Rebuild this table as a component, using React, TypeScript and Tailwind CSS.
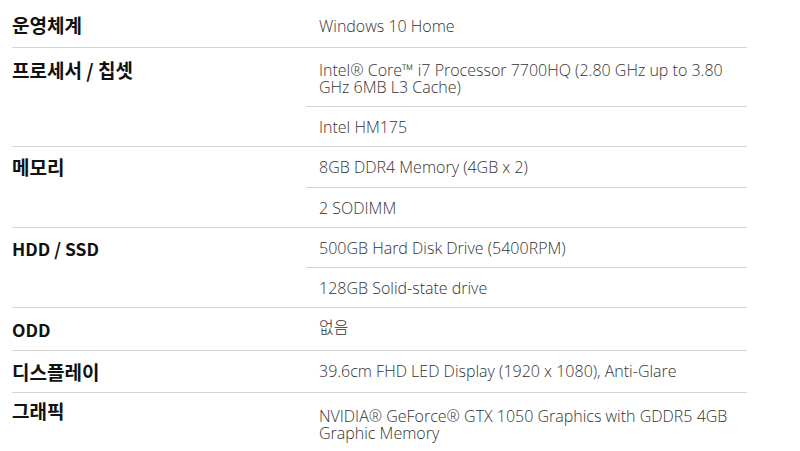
const specs = [
  { label: '운영체계', values: ['Windows 10 Home'], labelPad: 'pt-[15px]', valuePad: ['pt-[18px] pb-[12px]'] },
  {
    label: '프로세서 / 칩셋',
    values: ['Intel® Core™ i7 Processor 7700HQ (2.80 GHz up to 3.80 GHz 6MB L3 Cache)', 'Intel HM175'],
    labelPad: 'pt-[12px]',
    valuePad: ['pt-[14px] pb-[10px]', 'pt-[12px] pb-[10px]'],
  },
  {
    label: '메모리',
    values: ['8GB DDR4 Memory (4GB x 2)', '2 SODIMM'],
    labelPad: 'pt-[10px]',
    valuePad: ['pt-[12px] pb-[11px]', 'pt-[12px] pb-[10px]'],
  },
  {
    label: 'HDD / SSD',
    values: ['500GB Hard Disk Drive (5400RPM)', '128GB Solid-state drive'],
    labelPad: 'pt-[11px]',
    latin: true,
    valuePad: ['pt-[12px] pb-[10px]', 'pt-[12px] pb-[10px]'],
  },
  {
    label: 'ODD',
    values: ['없음'],
    labelPad: 'pt-[12px] pb-[10px]',
    latin: true,
    valuePad: ['pt-[11px] pb-[10px]'],
  },
  {
    label: '디스플레이',
    values: ['39.6cm FHD LED Display (1920 x 1080), Anti-Glare'],
    labelPad: 'pt-[11px] pb-[10px]',
    valuePad: ['pt-[12px] pb-[10px]'],
  },
  {
    label: '그래픽',
    values: ['NVIDIA® GeForce® GTX 1050 Graphics with GDDR5 4GB Graphic Memory'],
    labelPad: 'pt-[8px]',
    valuePad: ['pt-[15px] pb-[10px]'],
  },
]

interface SpecRowProps {
  label: string
  values: string[]
  labelPad: string
  valuePad: string[]
  latin?: boolean
}

function SpecRow({ label, values, labelPad, valuePad, latin }: SpecRowProps) {
  return (
    <div className="flex border-b border-[#d4d4d4]">
      <div
        className={`w-[294px] shrink-0 font-bold leading-[20px] text-[#111] ${
          latin ? 'text-[17.5px]' : 'text-[19px]'
        } ${labelPad}`}
        style={{ fontFamily: '"Noto Sans CJK KR", sans-serif' }}
      >
        {label}
      </div>
      <div className="flex-1 min-w-0">
        {values.map((v, i) => (
          <div
            key={i}
            className={`pl-[13px] pr-[4px] text-[16px] leading-[17px] text-[#333] ${valuePad[i]} ${
              i < values.length - 1 ? 'border-b border-[#d4d4d4]' : ''
            }`}
          >
            {v}
          </div>
        ))}
      </div>
    </div>
  )
}

export default function App() {
  return (
    <div
      className="w-[800px] h-[451px] overflow-hidden bg-white"
      style={{ fontFamily: '"Open Sans", "Noto Sans CJK KR", sans-serif', fontWeight: 300 }}
    >
      <div className="ml-[12px] w-[735px]">
        {specs.map((s) => (
          <SpecRow key={s.label} {...s} />
        ))}
      </div>
    </div>
  )
}
